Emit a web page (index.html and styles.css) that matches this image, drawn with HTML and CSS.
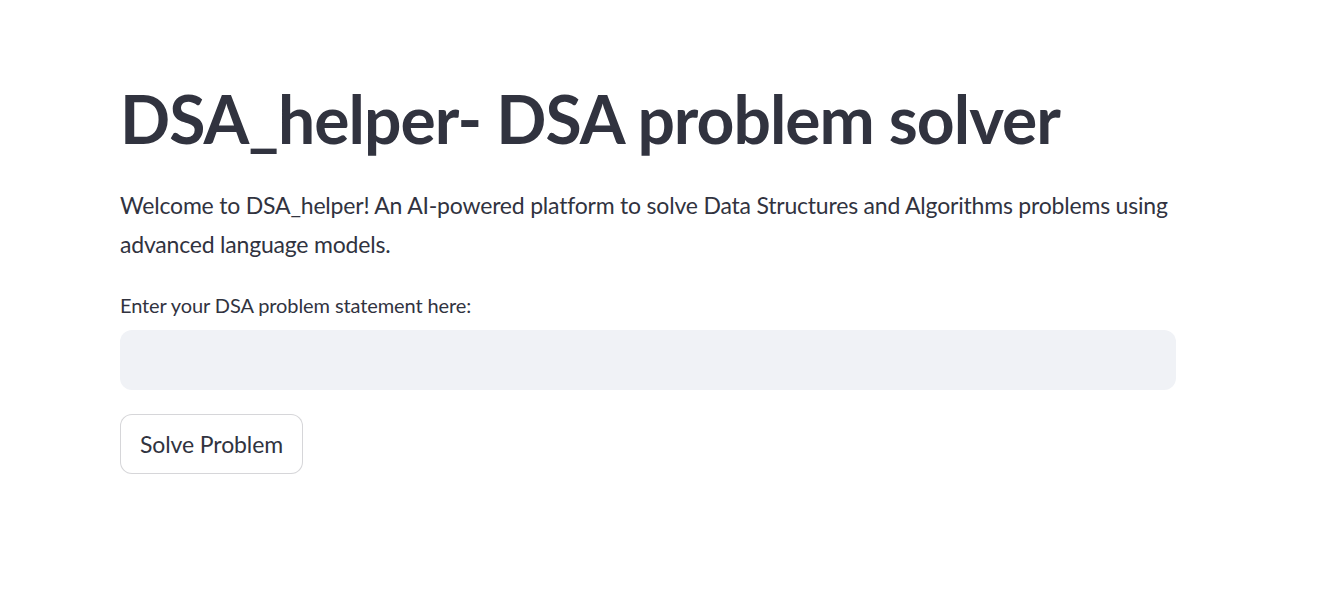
FILE: index.html
```html
<!DOCTYPE html>
<html>
<head>
<meta charset="utf-8">
<link rel="stylesheet" href="styles.css">
</head>
<body>
<main class="main">
  <h1 class="title">DSA_helper- DSA problem solver</h1>
  <p class="intro">Welcome to DSA_helper! An AI-powered platform to solve Data Structures and Algorithms problems using advanced language models.</p>
  <div class="field">
    <label class="label" for="q">Enter your DSA problem statement here:</label>
    <input class="input" id="q" type="text">
  </div>
  <button class="btn">Solve Problem</button>
</main>
</body>
</html>
```
FILE: styles.css
```css
html, body {
  margin: 0;
  padding: 0;
  background: #ffffff;
}
body {
  font-family: "Lato", "Noto Sans", sans-serif;
  color: #31333f;
}
.main {
  width: 1056px;
  padding: 79px 0 0 120px;
  display: flex;
  flex-direction: column;
  align-items: flex-start;
}
.title {
  margin: 0;
  font-size: 66px;
  font-weight: 700;
  line-height: 80px;
  letter-spacing: -1px;
}
.intro {
  margin: 27px 0 0;
  font-size: 23px;
  line-height: 39px;
  letter-spacing: -0.2px;
  width: 1056px;
}
.field {
  margin-top: 27px;
  width: 1056px;
  display: flex;
  flex-direction: column;
}
.label {
  font-size: 20px;
  line-height: 28px;
  letter-spacing: -0.1px;
  margin-bottom: 11px;
}
.input {
  height: 60px;
  box-sizing: border-box;
  border: none;
  border-radius: 12px;
  background: #f0f2f6;
  font: inherit;
  padding: 0 18px;
  outline: none;
}
.btn {
  margin-top: 24px;
  height: 60px;
  padding: 0 19px;
  box-sizing: border-box;
  border: 1px solid rgba(49, 51, 63, 0.2);
  border-radius: 12px;
  background: #ffffff;
  color: #31333f;
  font-family: inherit;
  font-size: 23px;
  letter-spacing: -0.1px;
}
```
